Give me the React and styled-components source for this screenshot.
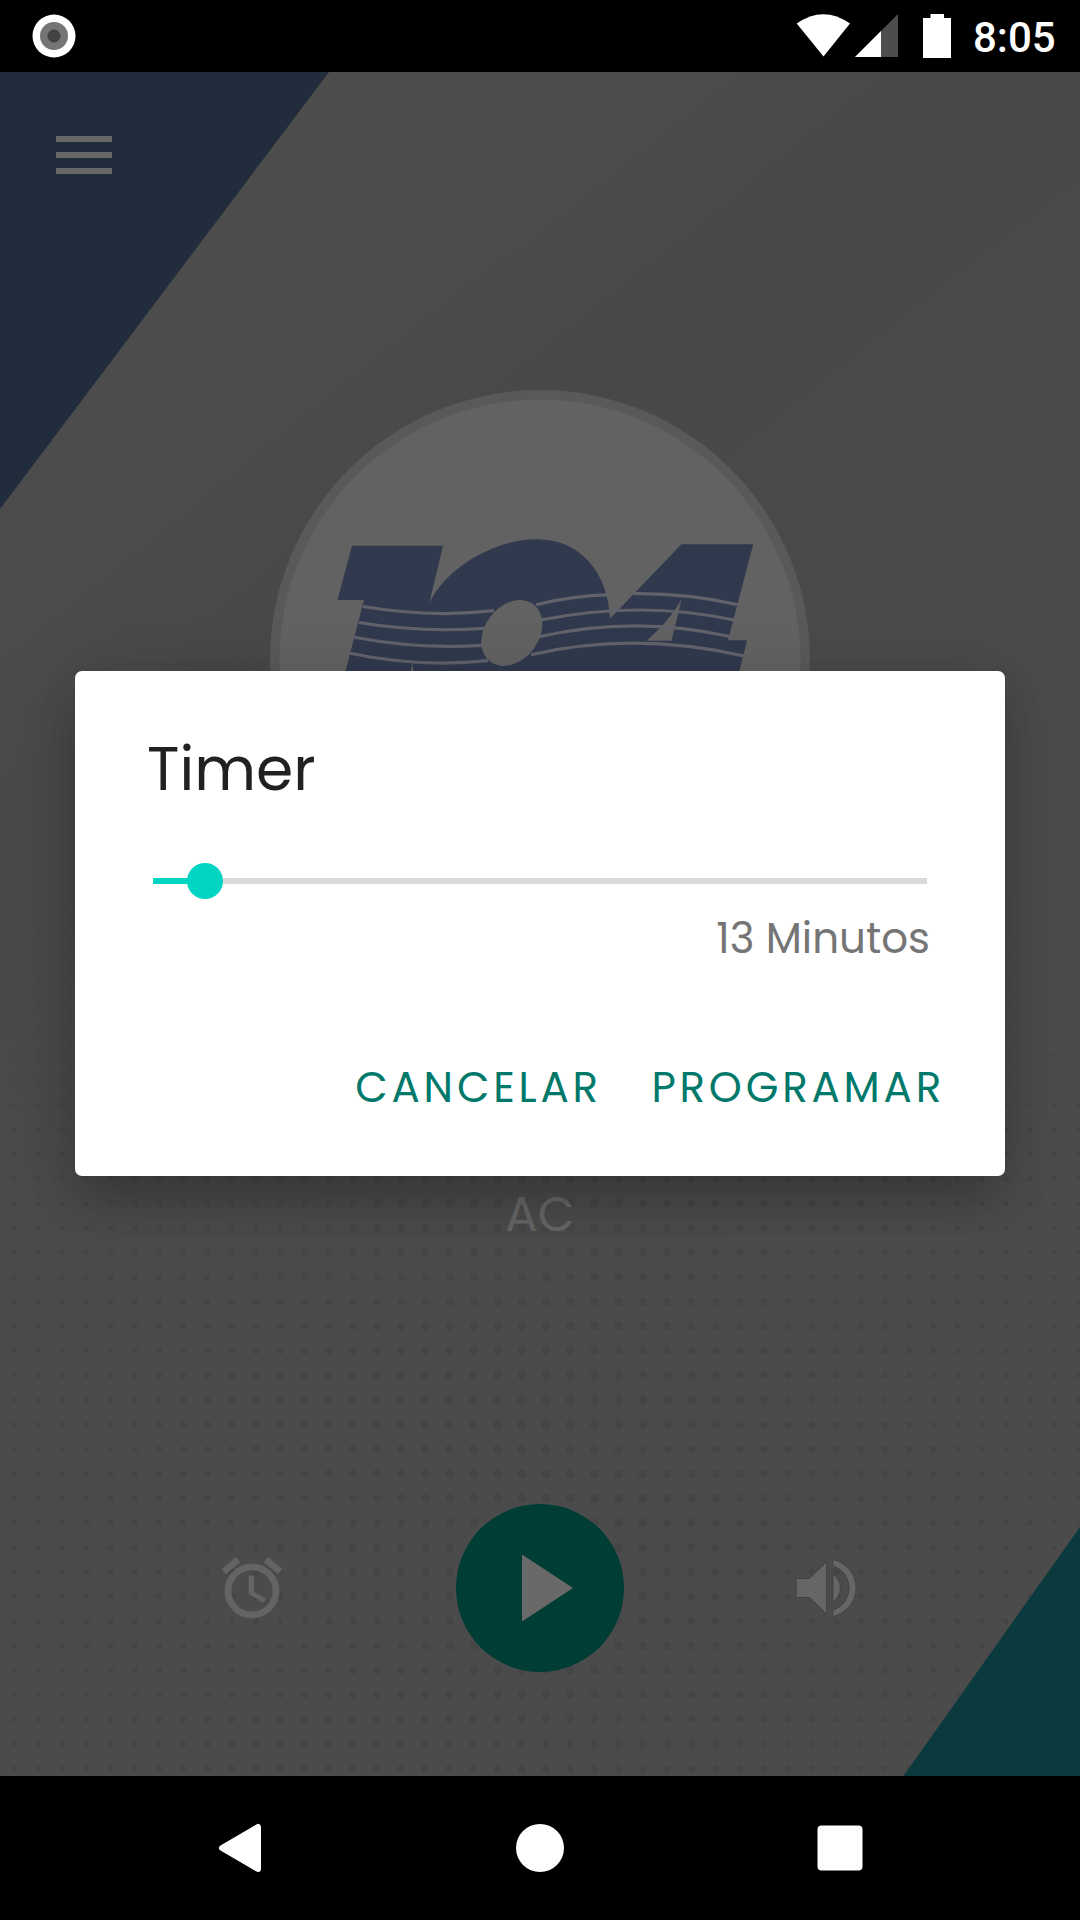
// src/App.jsx

import React from 'react';
import styled, { createGlobalStyle } from 'styled-components';

const GlobalStyle = createGlobalStyle`
  body {
    margin: 0;
    background: #000;
    font-family: Poppins, Inter, 'Open Sans', sans-serif;
  }
`;

const Screen = styled.div`
  position: relative;
  display: flex;
  flex-direction: column;
  width: 1080px;
  height: 1920px;
  overflow: hidden;
`;

const StatusBar = styled.div`
  display: flex;
  align-items: center;
  justify-content: space-between;
  box-sizing: border-box;
  height: 72px;
  padding: 0 23px 0 32px;
  background: #000;
`;

const StatusIcons = styled.div`
  display: flex;
  align-items: center;
`;

const Clock = styled.span`
  width: 84px;
  margin-left: 21px;
  padding-top: 3px;
  color: #fff;
  font-family: Roboto, sans-serif;
  font-size: 42px;
  font-weight: 500;
  line-height: 70px;
`;

const Player = styled.main`
  position: relative;
  display: flex;
  flex-direction: column;
  align-items: center;
  height: 1704px;
  background: #4b4b4b;
`;

const Backdrop = styled.svg`
  position: absolute;
  top: 0;
  left: 0;
`;

const Header = styled.header`
  position: relative;
  box-sizing: border-box;
  width: 100%;
  height: 318px;
  padding: 64px 56px;
`;

const MenuButton = styled.button`
  display: flex;
  flex-direction: column;
  gap: 10px;
  width: 56px;
  padding: 0;
  border: none;
  background: none;
`;

const MenuLine = styled.span`
  height: 6px;
  background: #666;
`;

const Logo = styled.svg`
  position: relative;
  flex: none;
`;

const Region = styled.div`
  position: relative;
  margin-top: 255px;
  color: #656565;
  font-size: 48px;
  line-height: 60px;
`;

const Controls = styled.div`
  position: relative;
  display: flex;
  align-items: center;
  justify-content: space-between;
  box-sizing: border-box;
  width: 100%;
  margin-top: 259px;
  padding: 0 216px;
`;

const PlayButton = styled.button`
  display: flex;
  width: 168px;
  height: 168px;
  padding: 0;
  border: none;
  border-radius: 50%;
  background: #003d34;
`;

const NavBar = styled.nav`
  display: flex;
  align-items: center;
  justify-content: space-between;
  box-sizing: border-box;
  height: 144px;
  padding: 0 204px;
  background: #000;
`;

const DialogOverlay = styled.div`
  position: absolute;
  top: 72px;
  left: 0;
  display: flex;
  justify-content: center;
  width: 100%;
  height: 1704px;
`;

const Dialog = styled.section`
  display: flex;
  flex-direction: column;
  box-sizing: border-box;
  width: 930px;
  height: 505px;
  margin-top: 599px;
  padding: 58px 60px 0 72px;
  border-radius: 7px;
  background: #fff;
  box-shadow: 0 32px 50px -6px rgba(0, 0, 0, 0.18), 0 6px 60px rgba(0, 0, 0, 0.14);
`;

const DialogTitle = styled.h2`
  margin: 0;
  color: #212121;
  font-size: 60px;
  font-weight: 400;
  line-height: 80px;
`;

const Slider = styled.div`
  display: flex;
  align-items: center;
  height: 36px;
  margin: 54px 18px 0 6px;
`;

const SliderFill = styled.div`
  height: 6px;
  background: #03d5c3;
`;

const SliderThumb = styled.div`
  width: 36px;
  height: 36px;
  margin: 0 -18px;
  border-radius: 50%;
  background: #03d5c3;
  z-index: 1;
`;

const SliderRest = styled.div`
  flex: 1;
  height: 6px;
  background: #dadada;
`;

const TimerValue = styled.div`
  align-self: flex-end;
  margin: 10px 15px 0 0;
  color: #757575;
  font-size: 42px;
  line-height: 60px;
`;

const DialogActions = styled.div`
  display: flex;
  justify-content: flex-end;
  gap: 49.5px;
  margin-top: 89px;
`;

const DialogButton = styled.button`
  padding: 0;
  border: none;
  background: none;
  color: #00796b;
  font-family: inherit;
  font-size: 42px;
  line-height: 60px;
  letter-spacing: 3.8px;
`;

const COLUMNS = Array.from({ length: 45 }, (_, i) => 14 + i * 24.19);
const ROWS = Array.from({ length: 37 }, (_, i) => 812 + i * 24.57);

// dots shrink away from the middle and fade in from the top
function Dots() {
  return ROWS.map((y, row) =>
    COLUMNS.map((x) => {
      const spread = 1 - Math.abs(x - 540) / 540;
      const drop = Math.abs(y - 1400) / 600;
      return (
        <circle
          key={`${x}-${y}`}
          cx={x}
          cy={y}
          r={2.4 + spread * Math.max(0.8, 2.4 - drop * 1.6)}
          fill="#3f3f3f"
          opacity={Math.min(1, row / 12) * 0.42}
        />
      );
    })
  );
}

function PlayerBackdrop() {
  return (
    <Backdrop width="1080" height="1704" viewBox="0 0 1080 1704">
      <defs>
        <linearGradient id="sheen" gradientUnits="userSpaceOnUse" x1="100" y1="100" x2="900" y2="1100">
          <stop offset="0" stopColor="#4d4d4d" />
          <stop offset="0.25" stopColor="#4b4b4b" />
          <stop offset="0.36" stopColor="#484848" />
          <stop offset="0.6" stopColor="#4a4a4a" />
          <stop offset="1" stopColor="#4b4b4b" />
        </linearGradient>
      </defs>
      <rect width="1080" height="1704" fill="url(#sheen)" />
      <Dots />
      <path d="M0 0H329L0 437Z" fill="#212c3c" />
      <path d="M1080 1455V1704H903.5Z" fill="#0a393e" />
    </Backdrop>
  );
}

function StationLogo() {
  return (
    <Logo width="540" height="540" viewBox="270 390 540 540">
      <circle cx="540" cy="660" r="270" fill="#595959" />
      <circle cx="540" cy="660" r="260.5" fill="#626262" />
      <path
        d="M352 545.7H443L429.3 603.3C446 568 494 539.3 536.8 539.3C580 539.3 608 572 610 618.7L681.4 544.3H753.2L728 640.3H747L720 750H325L364 600H337.5Z"
        fill="#31394e"
      />
      <ellipse cx="511.8" cy="633" rx="36" ry="27" transform="rotate(-53 511.8 633)" fill="#626262" />
      <path d="M681.8 599L671.4 640.7H646.4Q668 623 681.8 599Z" fill="#626262" />
      <path d="M412 662L413.5 675H411Z" fill="#777" />
      <g fill="none" stroke="#61626a" strokeWidth="3.2">
        <path d="M363 606.5Q431 618 494 610.7" />
        <path d="M359 622.5Q420 633 485 628.3" />
        <path d="M354.5 637.3Q418 649.5 482 645.3" />
        <path d="M350 653.3Q420 668 488 660.7" />
        <path d="M536 604.7Q574 595.5 610 594.7" />
        <path d="M634 593.7Q686 593 738 604.7" />
        <path d="M541 620Q641 600 734 620" />
        <path d="M539 636.7Q634 615 730 636.5" />
        <path d="M531 654.7Q634 631 744 656" />
      </g>
    </Logo>
  );
}

function App() {
  const progress = 52;

  return (
    <Screen>
      <GlobalStyle />
      <StatusBar>
        <svg width="44" height="44" viewBox="0 0 44 44">
          <circle cx="22" cy="22" r="21.5" fill="#fff" />
          <circle cx="22" cy="22" r="14" fill="#757575" />
          <circle cx="22" cy="22" r="6.5" fill="#424242" />
        </svg>
        <StatusIcons>
          <svg width="156" height="44" viewBox="796 14 156 44">
            <path d="M796.7 23.5Q823.5 4.8 850 23.5L823.5 56.5Z" fill="#fff" />
            <path d="M855 57L898 14V57Z" fill="#4d4d4d" />
            <path d="M855 57L881 31V57Z" fill="#fff" />
            <path d="M930.5 14H944V18H951V58H923V18H930.5Z" fill="#fff" />
          </svg>
          <Clock>8:05</Clock>
        </StatusIcons>
      </StatusBar>

      <Player>
        <PlayerBackdrop />
        <Header>
          <MenuButton>
            <MenuLine />
            <MenuLine />
            <MenuLine />
          </MenuButton>
        </Header>
        <StationLogo />
        <Region>AC</Region>
        <Controls>
          <svg width="72" height="72" viewBox="0 0 24 24" fill="#646464" stroke="#646464" strokeWidth="0.25">
            <path d="M22 5.72l-4.6-3.86-1.29 1.53 4.6 3.86L22 5.72zM7.88 3.39L6.6 1.86 2 5.71l1.29 1.53 4.59-3.85zM12.5 8H11v6l4.75 2.85.75-1.23-4-2.37V8zM12 4c-4.97 0-9 4.03-9 9s4.02 9 9 9a9 9 0 0 0 0-18zm0 16c-3.87 0-7-3.13-7-7s3.13-7 7-7 7 3.13 7 7-3.13 7-7 7z" />
          </svg>
          <PlayButton>
            <svg width="168" height="168" viewBox="0 0 168 168">
              <path d="M66 50.5L117 84L66 117.5Z" fill="#696969" />
            </svg>
          </PlayButton>
          <svg width="72" height="72" viewBox="792 1552 72 72">
            <g fill="#666" stroke="#424242" strokeWidth="1.8" paintOrder="stroke">
              <path d="M796.7 1579H809.5L826 1562.7V1613L809.5 1597H796.7Z" />
              <path d="M833.3 1575.5C842 1579 842 1597 833.3 1600.5Z" />
              <path d="M833.3 1560C863 1567 863 1609 833.3 1616V1610.5C855 1603 855 1573 833.3 1565.5Z" />
            </g>
          </svg>
        </Controls>
      </Player>

      <NavBar>
        <svg width="72" height="72" viewBox="0 0 72 72">
          <path d="M18 36L54 15V57Z" fill="#fff" stroke="#fff" strokeWidth="6" strokeLinejoin="round" />
        </svg>
        <svg width="72" height="72" viewBox="0 0 72 72">
          <circle cx="36" cy="36" r="24" fill="#fff" />
        </svg>
        <svg width="72" height="72" viewBox="0 0 72 72">
          <rect x="13.5" y="13.5" width="45" height="45" rx="4" fill="#fff" />
        </svg>
      </NavBar>

      <DialogOverlay>
        <Dialog>
          <DialogTitle>Timer</DialogTitle>
          <Slider>
            <SliderFill style={{ width: progress }} />
            <SliderThumb />
            <SliderRest />
          </Slider>
          <TimerValue>13 Minutos</TimerValue>
          <DialogActions>
            <DialogButton>CANCELAR</DialogButton>
            <DialogButton>PROGRAMAR</DialogButton>
          </DialogActions>
        </Dialog>
      </DialogOverlay>
    </Screen>
  );
}

export default App;
